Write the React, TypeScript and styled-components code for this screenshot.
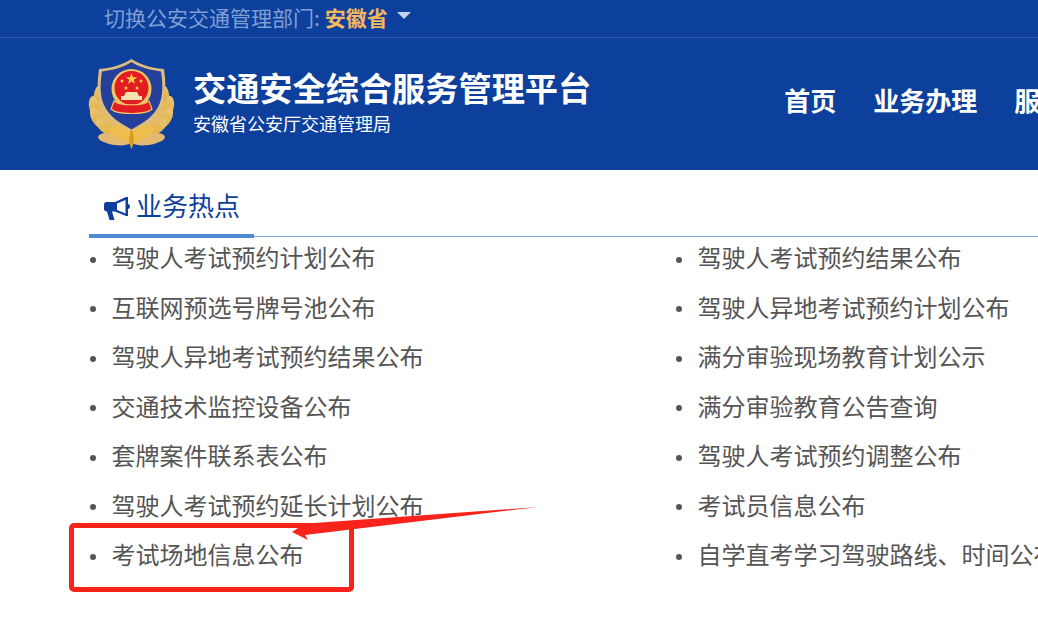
import React from "react";
import styled, { createGlobalStyle } from "styled-components";

const leftItems = [
    "驾驶人考试预约计划公布",
    "互联网预选号牌号池公布",
    "驾驶人异地考试预约结果公布",
    "交通技术监控设备公布",
    "套牌案件联系表公布",
    "驾驶人考试预约延长计划公布",
    "考试场地信息公布",
];

const rightItems = [
    "驾驶人考试预约结果公布",
    "驾驶人异地考试预约计划公布",
    "满分审验现场教育计划公示",
    "满分审验教育公告查询",
    "驾驶人考试预约调整公布",
    "考试员信息公布",
    "自学直考学习驾驶路线、时间公布",
];

// wheat leaves on the left side of the badge, mirrored for the right side: [cx, cy, rx, ry, angle]
const leaves = [
    [10, 35, 4, 9, 12],
    [6, 47, 5, 10, -8],
    [9, 59, 5.5, 11, -28],
    [17, 68, 5.5, 11, -48],
];

const GlobalStyle = createGlobalStyle`
  html, body {
    margin: 0;
    padding: 0;
    width: 1038px;
    height: 623px;
    overflow: hidden;
    background: #fff;
    font-family: "Noto Sans CJK SC", "Liberation Sans", sans-serif;
  }
`;

const Page = styled.div`
  position: relative;
  width: 1038px;
  height: 623px;
  overflow: hidden;
`;

const Header = styled.header`
  background: #0d3f9c;
  height: 170px;
`;

const TopBar = styled.div`
  height: 37px;
  display: flex;
  align-items: flex-start;
  padding-left: 104px;
  border-bottom: 1px solid #2a59b5;
  font-size: 21px;
  line-height: 35px;
  color: #7f9fd2;
  white-space: nowrap;
`;

const Region = styled.b`
  color: #f5b85c;
  margin-left: 5px;
  font-weight: 700;
`;

const Caret = styled.i`
  width: 0;
  height: 0;
  margin: 12px 0 0 9px;
  border-left: 7px solid transparent;
  border-right: 7px solid transparent;
  border-top: 7px solid #c5d3ea;
`;

const MainBar = styled.div`
  display: flex;
  align-items: center;
  height: 132px;
  padding-left: 88px;
`;

const EmblemIcon = styled.svg`
  width: 87px;
  height: 90px;
  flex: none;
  margin-top: -1px;
`;

const Brand = styled.div`
  display: flex;
  flex-direction: column;
  flex: none;
  margin-left: 18px;
  margin-top: -5px;
  color: #fff;
  white-space: nowrap;
`;

const Title = styled.div`
  font-size: 33.2px;
  line-height: 42px;
  font-weight: 700;
`;

const SubTitle = styled.div`
  font-size: 18px;
  line-height: 30px;
`;

const Nav = styled.nav`
  display: flex;
  flex: none;
  gap: 37px;
  margin-left: 193px;
  margin-top: -9px;
  white-space: nowrap;
`;

const NavItem = styled.a`
  font-size: 26px;
  font-weight: 700;
  color: #fff;
`;

const Section = styled.section`
  padding-left: 89px;
`;

const TabRow = styled.div`
  height: 67px;
  border-bottom: 1px solid #7fabdd;
  box-sizing: border-box;
  display: flex;
  align-items: flex-end;
`;

const Tab = styled.div`
  width: 165px;
  height: 67px;
  box-sizing: border-box;
  margin-bottom: -2px;
  padding: 15px 0 0 14px;
  border-bottom: 4px solid #4f8bd3;
  display: flex;
  align-items: flex-start;
  gap: 6px;
  font-size: 26px;
  line-height: 38px;
  color: #0d3f9c;
  white-space: nowrap;
`;

const HornIcon = styled.svg`
  width: 27px;
  height: 26px;
  margin-top: 10px;
  flex: none;
`;

const Columns = styled.div`
  display: grid;
  grid-template-columns: 586px 586px;
  margin-top: -5px;
`;

const List = styled.ul`
  list-style: none;
  margin: 0;
  padding: 0;
`;

const Item = styled.li`
  display: flex;
  align-items: center;
  height: 49.5px;
  font-size: 24px;
  color: #555;
  white-space: nowrap;

  &::before {
    content: "";
    width: 6px;
    height: 6px;
    margin: 6px 15.5px 0 1px;
    border-radius: 50%;
    background: #555;
    flex: none;
  }
`;

const MarkBox = styled.div`
  position: absolute;
  left: 69px;
  top: 523px;
  width: 285px;
  height: 69px;
  box-sizing: border-box;
  border: 5px solid #f8231a;
  border-radius: 5px;
`;

const MarkArrow = styled.svg`
  position: absolute;
  left: 285px;
  top: 500px;
  width: 260px;
  height: 50px;
`;

const Emblem = () => (
    <EmblemIcon viewBox="0 0 87 90">
        <defs>
            <linearGradient id="gold" x1="0" y1="0" x2="0" y2="1">
                <stop offset="0" stopColor="#e6c57f"/>
                <stop offset="1" stopColor="#e6ac2e"/>
            </linearGradient>
        </defs>
        <path d="M8 34C2 48 4 64 20 76L43.500 84L67 76C83 64 85 48 79 34L60 60H27Z" fill="#e2bb6c"/>
        {leaves.map(([cx, cy, rx, ry, angle]) => (
            <g key={cy} fill="url(#gold)">
                <ellipse cx={cx} cy={cy} rx={rx} ry={ry} transform={`rotate(${angle} ${cx} ${cy})`}/>
                <ellipse cx={87 - cx} cy={cy} rx={rx} ry={ry} transform={`rotate(${-angle} ${87 - cx} ${cy})`}/>
            </g>
        ))}
        <path d="M43.5 0C51 5 62 9 76 10C78 24 78 36 74 46C68 60 56 67 43.5 74C31 67 19 60 13 46C9 36 9 24 11 10C25 9 36 5 43.5 0Z" fill="#dcbd80"/>
        <path d="M43.5 3C51 8 61 11 73 12.500C75 25 75 36 71.500 45C66 58 55 64 43.5 70.500C32 64 21 58 15.500 45C12 36 12 25 14 12.500C26 11 36 8 43.5 3Z" fill="#24409a"/>
        <circle cx="43.5" cy="30" r="20" fill="#f0c564"/>
        <circle cx="43.5" cy="29" r="17" fill="#e31b23"/>
        <path d="M43.500 14l1.400 4.200h4.400l-3.600 2.600 1.400 4.200-3.600-2.600-3.600 2.600 1.400-4.200-3.600-2.600h4.400z" fill="#f7d04f"/>
        <circle cx="34" cy="22" r="1.500" fill="#f7d04f"/>
        <circle cx="53" cy="22" r="1.500" fill="#f7d04f"/>
        <circle cx="38" cy="29" r="1.500" fill="#f7d04f"/>
        <circle cx="49" cy="29" r="1.500" fill="#f7d04f"/>
        <path d="M33 41V37H36L38 33H49L51 37H54V41Z" fill="#f6e3b0"/>
        <path d="M26 42C32 47 55 47 61 42L64 50C58 56 29 56 23 50Z" fill="#e31b23" stroke="#f0c564" strokeWidth="1.200"/>
        <ellipse cx="27" cy="80" rx="17" ry="6" fill="#e2b873" transform="rotate(8 27 80)"/>
        <ellipse cx="60" cy="80" rx="17" ry="6" fill="#e2b873" transform="rotate(-8 60 80)"/>
        <path d="M19 68C30 64 38 68 43.500 74C49 68 57 64 68 68C63 78 52 83 43.500 83C35 83 24 78 19 68Z" fill="#eebd4c"/>
        <path d="M43.500 70C46 76 47 83 43.500 90C40 83 41 76 43.500 70Z" fill="#d99a20"/>
    </EmblemIcon>
);

export default function App() {
    return (
        <Page>
            <GlobalStyle/>
            <Header>
                <TopBar>
                    切换公安交通管理部门:<Region>安徽省</Region><Caret/>
                </TopBar>
                <MainBar>
                    <Emblem/>
                    <Brand>
                        <Title>交通安全综合服务管理平台</Title>
                        <SubTitle>安徽省公安厅交通管理局</SubTitle>
                    </Brand>
                    <Nav>
                        <NavItem>首页</NavItem>
                        <NavItem>业务办理</NavItem>
                        <NavItem>服务指南</NavItem>
                    </Nav>
                </MainBar>
            </Header>
            <Section>
                <TabRow>
                    <Tab>
                        <HornIcon viewBox="0 0 27 26">
                            <path d="M1 8.5C1 7 2 6 3.5 6H12L23 1H25V20H23L12 15.5H9L11.5 24H6.5L4 15.5C2 15.5 1 14.5 1 13Z" fill="#0d3f9c"/>
                            <path d="M14 7.5L22.5 4V17.5L14 14Z" fill="#fff"/>
                            <path d="M25 8C26.5 8.5 27 9.5 27 10.5C27 11.5 26.5 12.5 25 13Z" fill="#0d3f9c"/>
                        </HornIcon>
                        业务热点
                    </Tab>
                </TabRow>
                <Columns>
                    <List>
                        {leftItems.map(item => <Item key={item}>{item}</Item>)}
                    </List>
                    <List>
                        {rightItems.map(item => <Item key={item}>{item}</Item>)}
                    </List>
                </Columns>
            </Section>
            <MarkBox/>
            <MarkArrow viewBox="0 0 260 50">
                <path d="M253 7L15 24L13 28L7 32L23 40L20 35Z" fill="#f8231a"/>
            </MarkArrow>
        </Page>
    );
}
